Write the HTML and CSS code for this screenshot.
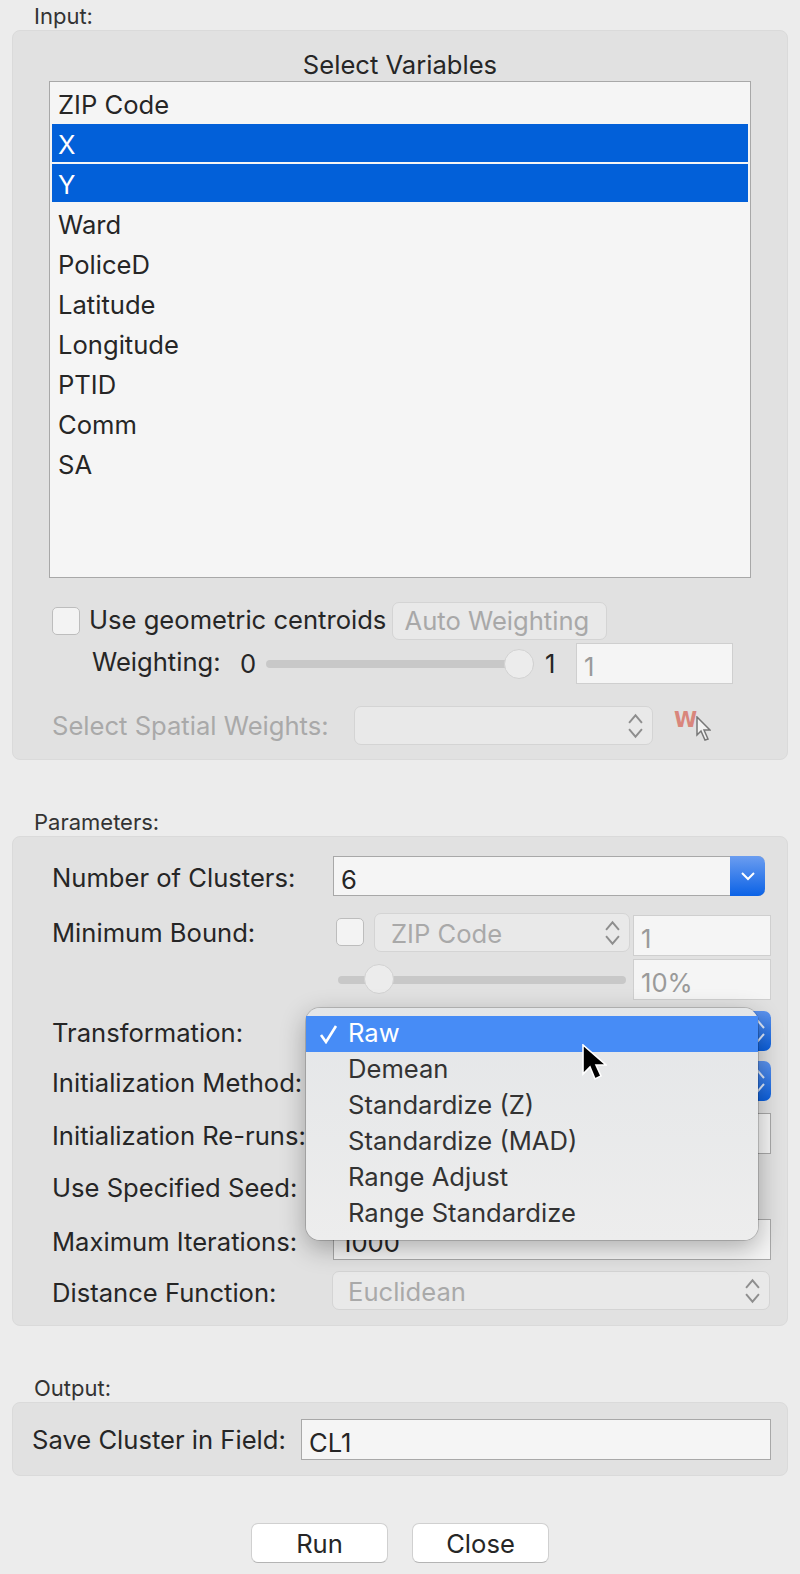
FILE: index.html
```html
<!DOCTYPE html>
<html lang="en">
<head>
<meta charset="utf-8">
<title>K Means Clustering Settings</title>
<link rel="stylesheet" href="styles.css">
</head>
<body>
<main class="page">
  <div class="group-label">Input:</div>
  <section class="panel panel-input">
    <div class="list-title">Select Variables</div>
    <ul class="list">
      <li>ZIP Code</li>
      <li class="sel"><span>X</span></li>
      <li class="sel"><span>Y</span></li>
      <li>Ward</li>
      <li>PoliceD</li>
      <li>Latitude</li>
      <li>Longitude</li>
      <li>PTID</li>
      <li>Comm</li>
      <li>SA</li>
    </ul>
    <div class="centroid-row">
      <span class="check"></span>
      <span class="centroid-label">Use geometric centroids</span>
      <span class="btn-disabled">Auto Weighting</span>
    </div>
    <div class="weight-row">
      <span class="weight-label">Weighting:</span>
      <span class="weight-min">0</span>
      <div class="slider slider-w"><span class="thumb thumb-max"></span></div>
      <span class="weight-max">1</span>
      <div class="field field-disabled field-w">1</div>
    </div>
    <div class="spatial-row">
      <span class="spatial-label">Select Spatial Weights:</span>
      <div class="select select-spatial">
        <svg class="updown" viewBox="0 0 14 24"><path d="M1 9l6-7 6 7M1 15l6 7 6-7"/></svg>
      </div>
      <div class="w-icon">
        <span class="w-letter">W</span>
        <svg class="w-cursor" viewBox="0 0 16 26"><path d="M2 1v18l4-4 4 9 3-1-4-9h6z"/></svg>
      </div>
    </div>
  </section>

  <div class="group-label group-next">Parameters:</div>
  <section class="panel panel-params">
    <div class="row r1">
      <span class="label">Number of Clusters:</span>
      <div class="combo">
        <span class="combo-text">6</span>
        <span class="combo-btn"><svg viewBox="0 0 16 10"><path d="M2 2l6 6 6-6"/></svg></span>
      </div>
    </div>
    <div class="row r2">
      <span class="label label-top">Minimum Bound:</span>
      <div class="bound">
        <div class="bound-top">
          <span class="check check-b"></span>
          <div class="select select-zip">ZIP Code
            <svg class="updown" viewBox="0 0 14 24"><path d="M1 9l6-7 6 7M1 15l6 7 6-7"/></svg>
          </div>
          <div class="field field-disabled field-b">1</div>
        </div>
        <div class="bound-bottom">
          <div class="slider slider-b"><span class="thumb thumb-low"></span></div>
          <div class="field field-disabled field-b">10%</div>
        </div>
      </div>
    </div>
    <div class="row r3">
      <span class="label">Transformation:</span>
      <div class="blue-select"><span class="blue-end"><svg class="updown-white" viewBox="0 0 14 24"><path d="M1 9l6-7 6 7M1 15l6 7 6-7"/></svg></span></div>
    </div>
    <div class="row r4">
      <span class="label">Initialization Method:</span>
      <div class="blue-select"><span class="blue-end"><svg class="updown-white" viewBox="0 0 14 24"><path d="M1 9l6-7 6 7M1 15l6 7 6-7"/></svg></span></div>
    </div>
    <div class="row r5">
      <span class="label">Initialization Re-runs:</span>
      <div class="field field-wide"></div>
    </div>
    <div class="row r6">
      <span class="label">Use Specified Seed:</span>
    </div>
    <div class="row r7">
      <span class="label">Maximum Iterations:</span>
      <div class="field field-wide">1000</div>
    </div>
    <div class="row r8">
      <span class="label">Distance Function:</span>
      <div class="select select-distance">Euclidean
        <svg class="updown" viewBox="0 0 14 24"><path d="M1 9l6-7 6 7M1 15l6 7 6-7"/></svg>
      </div>
    </div>

    <ul class="menu">
      <li class="menu-active">
        <svg class="tick" viewBox="0 0 20 20"><path d="M3 11l5 7L18 2"/></svg>
        Raw
      </li>
      <li>Demean</li>
      <li>Standardize (Z)</li>
      <li>Standardize (MAD)</li>
      <li>Range Adjust</li>
      <li>Range Standardize</li>
    </ul>
    <svg class="pointer" viewBox="0 0 26 38"><path d="M2 1v29l7-7 5 12 6-3-5-11h10z"/></svg>
  </section>

  <div class="group-label group-next">Output:</div>
  <section class="panel panel-output">
    <span class="save-label">Save Cluster in Field:</span>
    <div class="field field-save">CL1</div>
  </section>

  <div class="actions">
    <span class="btn">Run</span>
    <span class="btn">Close</span>
  </div>
</main>
</body>
</html>
```

FILE: styles.css
```css
* { box-sizing: border-box; }
html, body { margin: 0; padding: 0; }
body {
  background: #ececec;
  color: #262626;
  font-family: Inter, "Liberation Sans", sans-serif;
  font-size: 25.6px;
}
ul { list-style: none; margin: 0; padding: 0; }

.page { width: 800px; height: 1574px; padding: 0 12px; overflow: hidden; }

.group-label {
  height: 30px;
  padding: 1px 0 0 22px;
  font-size: 22px;
  line-height: 30px;
  color: #333;
}
.group-next { margin-top: 46px; }

.panel {
  position: relative;
  width: 776px;
  background: #e1e1e1;
  border: 1px solid #dadada;
  border-radius: 8px;
}
.panel-input { height: 730px; }
.panel-params { height: 490px; padding-top: 19px; }
.panel-output {
  height: 74px;
  display: flex;
  align-items: center;
  padding: 0 16px 0 19px;
}

.list-title { height: 50px; line-height: 68px; text-align: center; }
.list {
  width: 702px;
  height: 497px;
  margin-left: 36px;
  padding: 2px;
  background: #f5f5f5;
  border: 1px solid #a8a8a8;
}
.list li { height: 40px; line-height: 42px; padding-left: 6px; }
.list .sel { color: #fff; }
.list .sel span {
  display: block;
  height: 38px;
  margin-left: -6px;
  padding-left: 6px;
  line-height: 41px;
  background: #0260d9;
}

.check {
  display: block;
  flex: none;
  width: 28px;
  height: 28px;
  background: #f3f3f3;
  border: 1px solid #bdbdbd;
  border-radius: 5px;
}

.centroid-row {
  display: flex;
  align-items: center;
  height: 38px;
  margin: 24px 0 0 39px;
}
.centroid-label { margin-left: 9px; padding-bottom: 3px; white-space: nowrap; }
.btn-disabled {
  width: 215px;
  height: 38px;
  margin-left: 6px;
  padding-right: 6px;
  text-align: center;
  line-height: 36px;
  color: #a8a8a8;
  background: #e9e9e9;
  border: 1px solid #d4d4d4;
  border-radius: 7px;
}

.weight-row {
  display: flex;
  align-items: center;
  height: 41px;
  margin: 3px 0 0 79px;
}
.weight-label { width: 148px; padding-bottom: 4px; }
.weight-min { width: 26px; }
.weight-max { width: 31px; margin-left: 11px; }

.slider { position: relative; height: 8px; background: #c8c8c8; border-radius: 4px; }
.slider-w { width: 268px; }
.slider-b { width: 288px; margin-left: 2px; }
.thumb {
  position: absolute;
  top: -11px;
  width: 30px;
  height: 30px;
  background: #ececec;
  border: 1px solid #d2d2d2;
  border-radius: 50%;
}
.thumb-max { right: 0; }
.thumb-low { left: 26px; top: -12px; }

.field {
  height: 41px;
  padding: 5px 0 0 7px;
  line-height: 36px;
  background: #f5f5f5;
  border: 1px solid #a8a8a8;
}
.field-disabled { color: #9a9a9a; border-color: #cfcfcf; }
.field-w { width: 157px; }
.field-b { width: 138px; }
.field-wide { width: 438px; }
.field-save { width: 470px; margin-left: auto; }

.spatial-row {
  display: flex;
  align-items: center;
  height: 39px;
  margin: 22px 0 0 39px;
}
.spatial-label { width: 302px; color: #a9a9a9; white-space: nowrap; }

.select {
  position: relative;
  height: 39px;
  padding-left: 16px;
  line-height: 40px;
  color: #a9a9a9;
  background: #e9e9e9;
  border: 1px solid #d4d4d4;
  border-radius: 7px;
}
.select-spatial { width: 299px; }
.select-zip { flex: none; width: 256px; margin-left: 10px; }
.select-distance { width: 438px; margin-left: -1px; padding-left: 15px; }
.updown {
  position: absolute;
  top: 6px;
  right: 9px;
  width: 15px;
  height: 26px;
  fill: none;
  stroke: #8e8e8e;
  stroke-width: 1.8;
}

.w-icon { position: relative; width: 36px; height: 32px; margin-left: 21px; }
.w-letter {
  position: absolute;
  left: 0;
  top: 0;
  font: bold 21px/20px "DejaVu Sans", sans-serif;
  color: #d9867c;
}
.w-cursor {
  position: absolute;
  left: 21px;
  top: 6px;
  width: 16px;
  height: 26px;
  fill: #f2f2f2;
  stroke: #777;
  stroke-width: 1.5;
}

.row { display: flex; align-items: center; margin-left: 39px; }
.label { flex: none; width: 281px; padding-top: 3px; white-space: nowrap; }
.save-label { padding-top: 1px; white-space: nowrap; }
.r1 { height: 40px; }
.r2 { height: 87px; margin-top: 17px; align-items: flex-start; }
.label-top { padding-top: 4px; }
.r3 { height: 40px; margin-top: 11px; }
.r4 { height: 40px; margin-top: 10px; }
.r5 { height: 41px; margin-top: 12px; }
.r6 { height: 42px; margin-top: 11px; }
.r7 { height: 41px; margin-top: 12px; }
.r8 { height: 39px; margin-top: 11px; }

.combo {
  display: flex;
  width: 432px;
  height: 40px;
  background: #f5f5f5;
  border: 1px solid #a8a8a8;
  border-right: 0;
  border-radius: 0 7px 7px 0;
}
.combo-text { flex: 1; padding: 5px 0 0 7px; line-height: 36px; }
.combo-btn {
  display: flex;
  align-items: center;
  justify-content: center;
  width: 35px;
  height: 40px;
  margin-top: -1px;
  background: linear-gradient(#6b9df0, #0b62e6);
  border-radius: 0 7px 7px 0;
}
.combo-btn svg { width: 16px; height: 10px; fill: none; stroke: #fff; stroke-width: 2; }

.bound { width: 435px; margin-left: 3px; }
.bound-top { display: flex; align-items: flex-start; height: 46px; }
.check-b { margin-top: 5px; }
.field-b { margin-left: 3px; margin-top: 2px; }
.bound-bottom { display: flex; align-items: center; justify-content: space-between; height: 41px; }
.bound-bottom .field-b { margin: 0; }

.blue-select {
  position: relative;
  width: 438px;
  height: 40px;
  background: #f5f5f5;
  border-radius: 7px;
}
.blue-end {
  position: absolute;
  top: 0;
  right: 0;
  width: 40px;
  height: 40px;
  background: linear-gradient(#5c93ee, #0b5fdc);
  border-radius: 0 7px 7px 0;
}
.updown-white {
  position: absolute;
  top: 8px;
  right: 6px;
  width: 14px;
  height: 24px;
  fill: none;
  stroke: #dfe9fb;
  stroke-width: 2;
}

.menu {
  position: absolute;
  left: 293px;
  top: 171px;
  width: 452px;
  height: 232px;
  padding-top: 8px;
  color: #333;
  background: linear-gradient(#e4e6e8, #ededed);
  border-radius: 14px;
  box-shadow: 0 0 0 1px rgba(0, 0, 0, .16), 0 8px 26px rgba(0, 0, 0, .3);
}
.menu li { position: relative; height: 36px; padding-left: 42px; line-height: 34px; }
.menu-active { color: #fff; background: #478cf6; }
.tick {
  position: absolute;
  left: 12px;
  top: 8px;
  width: 20px;
  height: 20px;
  fill: none;
  stroke: #fff;
  stroke-width: 2.6;
}

.pointer {
  position: absolute;
  left: 568px;
  top: 207px;
  width: 26px;
  height: 38px;
  fill: #000;
  stroke: #fff;
  stroke-width: 1.6;
}

.actions { display: flex; gap: 24px; margin: 47px 0 0 239px; }
.btn {
  width: 137px;
  height: 40px;
  text-align: center;
  line-height: 39px;
  background: #fff;
  border: 1px solid #d0d0d0;
  border-bottom-color: #b4b4b4;
  border-radius: 7px;
}
```
